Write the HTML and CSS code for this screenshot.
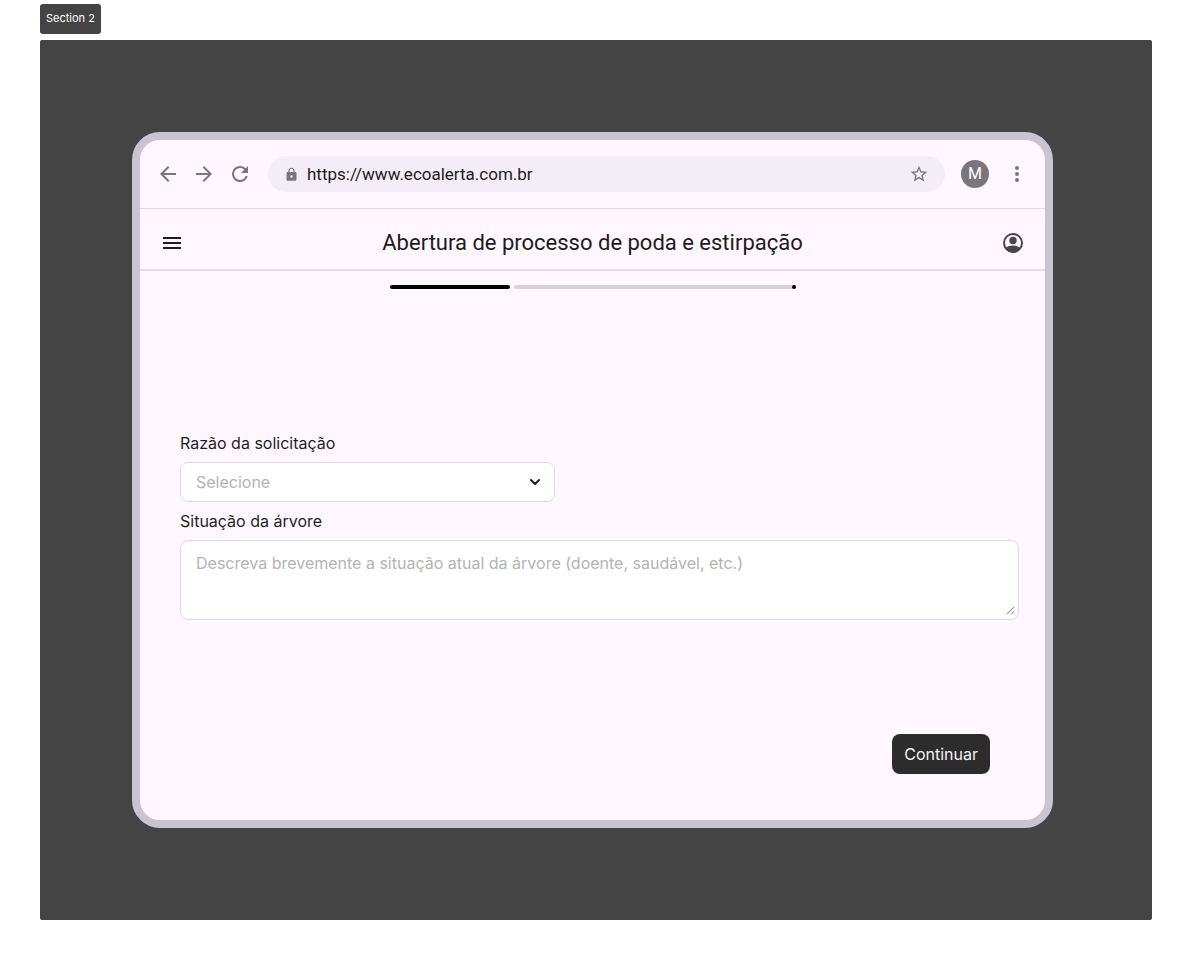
FILE: index.html
```html
<!DOCTYPE html>
<html lang="pt-BR">
<head>
  <meta charset="utf-8">
  <meta name="viewport" content="width=device-width, initial-scale=1">
  <title>Abertura de processo de poda e estirpação</title>
  <link rel="stylesheet" href="styles.css">
</head>
<body>
  <div class="board">
    <div class="tag">Section 2</div>
    <section class="section">
      <div class="browser">
        <div class="toolbar">
          <button class="icon-button" type="button" aria-label="Voltar">
            <svg class="icon" viewBox="0 0 24 24"><path d="M20 11H7.83l5.59-5.59L12 4l-8 8 8 8 1.41-1.41L7.83 13H20v-2z"/></svg>
          </button>
          <button class="icon-button" type="button" aria-label="Avançar">
            <svg class="icon" viewBox="0 0 24 24"><path d="M12 4l-1.41 1.41L16.17 11H4v2h12.17l-5.58 5.59L12 20l8-8z"/></svg>
          </button>
          <button class="icon-button" type="button" aria-label="Recarregar">
            <svg class="icon" viewBox="0 0 24 24"><path d="M17.65 6.35A7.958 7.958 0 0 0 12 4a8 8 0 1 0 7.73 10h-2.08A6 6 0 1 1 12 6c1.66 0 3.14.69 4.22 1.78L13 11h7V4l-2.35 2.35z"/></svg>
          </button>
          <div class="address">
            <svg class="lock" viewBox="0 0 24 24"><path d="M18 8h-1V6c0-2.760-2.240-5-5-5S7 3.240 7 6v2H6c-1.100 0-2 .9-2 2v10c0 1.100.9 2 2 2h12c1.100 0 2-.9 2-2V10c0-1.100-.9-2-2-2zm-6 9c-1.100 0-2-.9-2-2s.9-2 2-2 2 .9 2 2-.9 2-2 2zm3.100-9H8.900V6c0-1.710 1.390-3.100 3.100-3.100s3.100 1.390 3.100 3.100v2z"/></svg>
            <input class="url" type="text" aria-label="Endereço" value="https://www.ecoalerta.com.br">
            <button class="icon-button" type="button" aria-label="Adicionar aos favoritos">
              <svg class="star" viewBox="0 0 24 24"><path d="M22 9.240l-7.190-.62L12 2 9.190 8.630 2 9.240l5.460 4.730L5.820 21 12 17.270 18.180 21l-1.630-7.030L22 9.240zM12 15.400l-3.760 2.270 1-4.280-3.320-2.880 4.380-.38L12 6.100l1.710 4.040 4.380.38-3.320 2.880 1 4.280L12 15.400z"/></svg>
            </button>
          </div>
          <button class="avatar" type="button" aria-label="Perfil M">M</button>
          <button class="icon-button" type="button" aria-label="Mais opções">
            <svg class="icon" viewBox="0 0 24 24"><circle cx="12" cy="6" r="2"/><circle cx="12" cy="12" r="2"/><circle cx="12" cy="18" r="2"/></svg>
          </button>
        </div>

        <header class="app-bar">
          <button class="icon-button menu" type="button" aria-label="Menu">
            <svg class="icon" viewBox="0 0 24 24"><path d="M3 18h18v-2H3v2zm0-5h18v-2H3v2zm0-7v2h18V6H3z"/></svg>
          </button>
          <h1 class="title">Abertura de processo de poda e estirpação</h1>
          <button class="icon-button account" type="button" aria-label="Conta">
            <svg class="icon" viewBox="0 0 24 24">
              <circle cx="12" cy="12" r="9" fill="none" stroke="currentColor" stroke-width="2"/>
              <circle cx="12" cy="9.500" r="3.700"/>
              <path d="M4.500 16.900C6.500 15.400 9 14.600 12 14.600s5.500.8 7.500 2.300C17.900 19.900 15.200 21.500 12 21.500S6.100 19.900 4.500 16.900z"/>
            </svg>
          </button>
        </header>

        <div class="progress" role="progressbar" aria-label="Progresso" aria-valuemin="0" aria-valuemax="100" aria-valuenow="30">
          <div class="progress-done"></div>
          <div class="progress-rest"><span class="progress-stop"></span></div>
        </div>

        <form class="form">
          <div class="field reason">
            <label class="label" for="reason">Razão da solicitação</label>
            <div class="select-box">
              <select class="control select" id="reason">
                <option>Selecione</option>
              </select>
              <svg class="chevron" viewBox="0 0 16 16"><path d="M4 6l4 4 4-4"/></svg>
            </div>
          </div>
          <div class="field">
            <label class="label" for="situation">Situação da árvore</label>
            <div class="text-box">
              <textarea class="control textarea" id="situation" placeholder="Descreva brevemente a situação atual da árvore (doente, saudável, etc.)"></textarea>
              <svg class="grip" viewBox="0 0 8 8"><path d="M1 7l6-6M5 7l2-2"/></svg>
            </div>
          </div>
          <button class="submit" type="button">Continuar</button>
        </form>
      </div>
    </section>
  </div>
</body>
</html>
```
FILE: styles.css
```css
* {
  box-sizing: border-box;
}

body {
  margin: 0;
  background: #fff;
  color: #1e1e1e;
  font-family: Inter, "Liberation Sans", sans-serif;
  font-size: 16px;
}

button {
  border: 0;
  padding: 0;
  font: inherit;
  cursor: pointer;
}

.board {
  display: flex;
  flex-direction: column;
  align-items: flex-start;
  gap: 6px;
  padding: 4px 40px 40px;
}

.tag {
  padding: 0 6px 2px;
  border-radius: 3px;
  background: #444;
  color: #fff;
  font-size: 11px;
  line-height: 28px;
}

.section {
  align-self: stretch;
  padding: 92px 99px 92px 92px;
  border-radius: 2px;
  background: #444;
}

.browser {
  overflow: hidden;
  border: 8px solid #cac4d0;
  border-radius: 28px;
  background: #fef7ff;
}

.toolbar {
  display: flex;
  align-items: center;
  gap: 12px;
  padding: 16px;
  color: #79747e;
}

.icon-button {
  display: flex;
  background: none;
  color: inherit;
}

.icon {
  width: 24px;
  height: 24px;
  fill: currentColor;
}

.address {
  display: flex;
  flex: 1;
  align-items: center;
  height: 36px;
  margin: 0 4px;
  padding: 0 16px;
  border-radius: 18px;
  background: #f3edf7;
}

.lock {
  width: 15px;
  height: 15px;
  fill: currentColor;
}

.url {
  flex: 1;
  min-width: 0;
  padding: 0 8px;
  border: 0;
  background: none;
  color: #1d1b20;
  font-family: Roboto, sans-serif;
  font-size: 17px;
  line-height: 24px;
}

.star {
  width: 20px;
  height: 20px;
  fill: currentColor;
}

.avatar {
  width: 28px;
  height: 28px;
  border-radius: 50%;
  background: #79747e;
  color: #fff;
  font-family: Roboto, sans-serif;
  line-height: 28px;
}

.toolbar > .icon-button:last-child {
  margin: 0 0 0 4px;
}

.app-bar {
  display: flex;
  align-items: center;
  justify-content: space-between;
  padding: 18px 20px 10px;
  border-top: 1px solid #e0dbe4;
  border-bottom: 2px solid #e2dce5;
}

.menu {
  color: #1d1b20;
}

.account {
  color: #49454f;
}

.title {
  margin: 0;
  color: #1d1b20;
  font-family: Roboto, sans-serif;
  font-size: 22px;
  font-weight: 400;
  line-height: 32px;
}

.progress {
  display: flex;
  gap: 4px;
  width: 406px;
  max-width: 80%;
  margin: 14px auto 0;
}

.progress-done,
.progress-rest {
  height: 4px;
  border-radius: 2px;
}

.progress-done {
  flex: 3;
  background: #000;
}

.progress-rest {
  display: flex;
  flex: 7;
  justify-content: flex-end;
  background: #d5d3d7;
}

.progress-stop {
  width: 4px;
  height: 4px;
  border-radius: 50%;
  background: #000;
}

.form {
  display: flex;
  flex-direction: column;
  gap: 8px;
  padding: 143px 26px 46px 40px;
}

.field {
  display: flex;
  flex-direction: column;
  gap: 8px;
}

.label {
  line-height: 22px;
}

.reason {
  width: 375px;
  max-width: 100%;
}

.select-box,
.text-box {
  position: relative;
  display: flex;
}

.control {
  width: 100%;
  border: 1px solid #dedae0;
  border-radius: 8px;
  background: #fff;
  color: #b3b3b3;
  font: inherit;
}

.select {
  height: 40px;
  padding: 0 15px;
  appearance: none;
}

.chevron {
  position: absolute;
  top: 12px;
  right: 12px;
  width: 16px;
  height: 16px;
  fill: none;
  stroke: #1e1e1e;
  stroke-width: 2;
  stroke-linecap: round;
  stroke-linejoin: round;
  pointer-events: none;
}

.textarea {
  height: 80px;
  padding: 11px 15px;
  line-height: 22px;
  resize: none;
}

.textarea::placeholder {
  color: #b3b3b3;
}

.grip {
  position: absolute;
  right: 4px;
  bottom: 5px;
  width: 9px;
  height: 9px;
  fill: none;
  stroke: #999;
}

.submit {
  align-self: flex-end;
  height: 40px;
  margin: 106px 29px 0 0;
  padding: 0 12px;
  border-radius: 8px;
  background: #2c2c2c;
  color: #f5f5f5;
}
```
